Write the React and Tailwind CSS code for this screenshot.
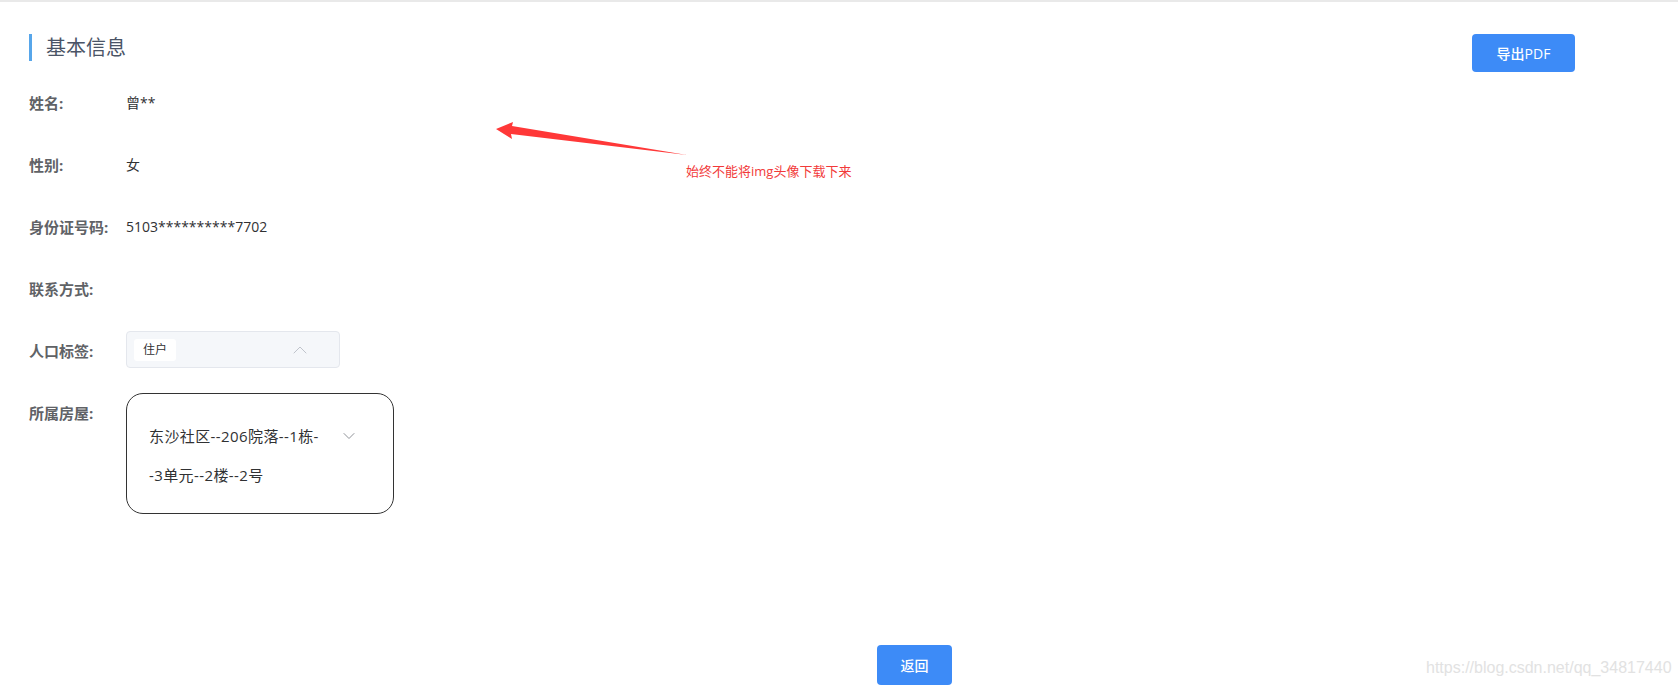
import { ChevronUp, ChevronDown } from 'lucide-react'

function Row({ label, children }) {
  return (
    <div className="flex items-start mb-[22px] min-h-[40px]">
      <div className="w-[97px] shrink-0 text-[15px] leading-[40px] font-bold text-[#606266]">{label}</div>
      <div className="text-[14px] leading-[40px] text-[#303133]">{children}</div>
    </div>
  )
}

export default function App() {
  return (
    <div className="relative w-[1678px] h-[685px] overflow-hidden bg-white flex flex-col [font-family:'Open_Sans','Noto_Sans_CJK_SC',sans-serif]">
      <div className="h-[2px] bg-[#e9e9e9] shrink-0" />

      <div className="flex-1 pl-[29px] pt-[32px]">
        {/* header */}
        <div className="flex items-start justify-between pr-[103px]">
          <div className="flex items-center h-[27px]">
            <span className="w-[3px] h-[27px] bg-[#57a6ea]" />
            <span className="ml-[14px] text-[20px] text-[#4a5466]">基本信息</span>
          </div>
          <button className="w-[103px] h-[38px] rounded-[4px] bg-[#3d8bf7] text-white text-[14px] font-medium">导出PDF</button>
        </div>

        <div className="mt-[11px]">
          <Row label="姓名:">曾**</Row>
          <Row label="性别:">女</Row>
          <Row label="身份证号码:">5103**********7702</Row>
          <Row label="联系方式:"></Row>
          <Row label="人口标签:">
            <div className="relative w-[214px] h-[37px] rounded-[4px] border border-[#e4e7ed] bg-[#f5f7fa] flex items-center pl-[7px]">
              <span className="h-[22px] px-[9px] rounded-[3px] bg-white text-[12px] leading-[22px] text-[#303133]">住户</span>
              <ChevronUp className="absolute left-[161px] top-[6px] w-[24px] h-[24px] text-[#c0c4cc]" strokeWidth={1} />
            </div>
          </Row>
          <Row label="所属房屋:">
            <div className="relative w-[268px] h-[121px] rounded-[17px] border border-[#333] pl-[22px] pt-[23px] text-[15px] tracking-[0.4px] leading-[39px]">
              <div>东沙社区--206院落--1栋-</div>
              <div>-3单元--2楼--2号</div>
              <ChevronDown className="absolute left-[212px] top-[32px] w-[20px] h-[20px] text-[#909399]" strokeWidth={1.2} />
            </div>
          </Row>
        </div>

        <div className="mt-[131px] pl-[848px]">
          <button className="w-[75px] h-[40px] rounded-[4px] bg-[#3d8bf7] text-white text-[14px] font-medium">返回</button>
        </div>
      </div>

      <div className="h-[2px] bg-[#e9e9e9] shrink-0 relative z-10" />

      {/* annotation */}
      <svg className="absolute left-0 top-0 pointer-events-none" width="1678" height="685">
        <polygon points="496,129 513,122 512,126 687,155 511,134 512,139" fill="#ff3838" />
      </svg>
      <div className="absolute left-[686px] top-[162px] text-[13px] text-[#f23a3a]">始终不能将img头像下载下来</div>

      {/* watermark */}
      <div className="absolute left-[1426px] top-[656px] text-[16px] text-[#e2e2e2] [font-family:'Liberation_Sans',sans-serif]">https://blog.csdn.net/qq_34817440</div>
    </div>
  )
}
